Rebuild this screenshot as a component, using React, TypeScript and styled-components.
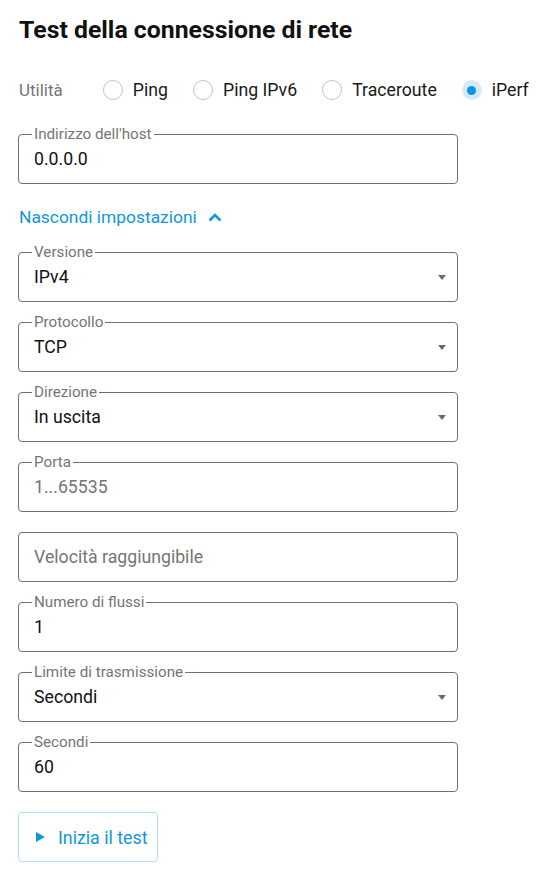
import React from "react";
import styled, { createGlobalStyle } from "styled-components";

const Global = createGlobalStyle`
  html, body { margin: 0; padding: 0; background: #fff; }
  body { font-family: Roboto, "Liberation Sans", Arial, sans-serif; color: #1a1a1a; }
  * { box-sizing: border-box; }
`;

const BLUE = "#0e97dd";
const GREY = "#757575";

const Page = styled.div`
  width: 545px;
  padding: 16px 0 12px 18px;
  display: flex;
  flex-direction: column;
`;

const Title = styled.h1`
  margin: 0 0 0 1px;
  font-size: 24.8px;
  line-height: 28px;
  font-weight: 700;
  color: #111;
`;

const RadioRow = styled.div`
  display: flex;
  align-items: center;
  height: 20px;
  margin-top: 36px;
  margin-left: 1px;
  white-space: nowrap;
`;

const RowLabel = styled.span`
  font-size: 17px;
  color: ${GREY};
  margin-right: 40px;
`;

const RadioItem = styled.label`
  display: flex;
  align-items: center;
  gap: 10px;
  margin-right: 25px;
  font-size: 17.7px;
  color: #1a1a1a;
  &:last-child { margin-right: 0; }
`;

const RadioCircle = styled.span<{ $checked?: boolean }>`
  width: 20px;
  height: 20px;
  border-radius: 50%;
  flex: none;
  display: flex;
  align-items: center;
  justify-content: center;
  border: ${(p) => (p.$checked ? "none" : "1px solid #c4c4c4")};
  background: ${(p) => (p.$checked ? "#d4eaf8" : "#fff")};
  &::after {
    content: "";
    display: ${(p) => (p.$checked ? "block" : "none")};
    width: 9px;
    height: 9px;
    border-radius: 50%;
    background: ${BLUE};
  }
`;

const Field = styled.div<{ $first?: boolean }>`
  position: relative;
  height: 50px;
  width: 440px;
  border: 1px solid #707070;
  border-radius: 4px;
  margin-top: ${(p) => (p.$first ? "34px" : "20px")};
  display: flex;
  align-items: center;
  padding: 0 15px;
`;

const FieldLabel = styled.span`
  position: absolute;
  top: -10px;
  left: 13px;
  padding: 0 2px;
  background: #fff;
  font-size: 15.2px;
  line-height: 18px;
  color: ${GREY};
`;

const Value = styled.span<{ $placeholder?: boolean }>`
  flex: 1;
  font-size: 17.7px;
  color: ${(p) => (p.$placeholder ? GREY : "#111")};
`;

const Caret = styled.span`
  width: 0;
  height: 0;
  border-left: 4px solid transparent;
  border-right: 4px solid transparent;
  border-top: 5px solid #6a6a6a;
  margin-right: -4px;
`;

const Toggle = styled.button`
  margin-top: 23px;
  margin-bottom: 5px;
  padding: 0;
  border: none;
  background: none;
  align-self: flex-start;
  display: flex;
  align-items: center;
  gap: 10px;
  height: 20px;
  font-family: inherit;
  font-size: 17.4px;
  color: ${BLUE};
  cursor: pointer;
  margin-left: 1px;
`;

const StartButton = styled.button`
  margin-top: 20px;
  width: 140px;
  height: 50px;
  border: 1px solid #b5dcf2;
  border-radius: 4px;
  background: #fff;
  display: flex;
  align-items: center;
  gap: 12px;
  padding: 0 0 0 16px;
  font-family: inherit;
  font-size: 17.8px;
  color: ${BLUE};
  cursor: pointer;
`;

type FieldDef = { label?: string; value: string; placeholder?: boolean; select?: boolean };

const fields: FieldDef[] = [
  { label: "Versione", value: "IPv4", select: true },
  { label: "Protocollo", value: "TCP", select: true },
  { label: "Direzione", value: "In uscita", select: true },
  { label: "Porta", value: "1...65535", placeholder: true },
  { value: "Velocità raggiungibile", placeholder: true },
  { label: "Numero di flussi", value: "1" },
  { label: "Limite di trasmissione", value: "Secondi", select: true },
  { label: "Secondi", value: "60" },
];

const radios = [
  { label: "Ping" },
  { label: "Ping IPv6" },
  { label: "Traceroute" },
  { label: "iPerf", checked: true },
];

export default function App() {
  return (
    <>
      <Global />
      <Page>
        <Title>Test della connessione di rete</Title>
        <RadioRow>
          <RowLabel>Utilità</RowLabel>
          {radios.map((r) => (
            <RadioItem key={r.label}>
              <RadioCircle $checked={r.checked} />
              {r.label}
            </RadioItem>
          ))}
        </RadioRow>
        <Field $first>
          <FieldLabel>Indirizzo dell'host</FieldLabel>
          <Value>0.0.0.0</Value>
        </Field>
        <Toggle>
          Nascondi impostazioni
          <svg width="16" height="10" viewBox="0 0 16 10">
            <path d="M2.5 8.5 L8 3 L13.5 8.5" fill="none" stroke={BLUE} strokeWidth="2.6" />
          </svg>
        </Toggle>
        {fields.map((f, i) => (
          <Field key={i}>
            {f.label && <FieldLabel>{f.label}</FieldLabel>}
            <Value $placeholder={f.placeholder}>{f.value}</Value>
            {f.select && <Caret />}
          </Field>
        ))}
        <StartButton>
          <svg width="11" height="12" viewBox="0 0 11 12">
            <path d="M1 1 L10 6 L1 11 Z" fill={BLUE} />
          </svg>
          Inizia il test
        </StartButton>
      </Page>
    </>
  );
}
